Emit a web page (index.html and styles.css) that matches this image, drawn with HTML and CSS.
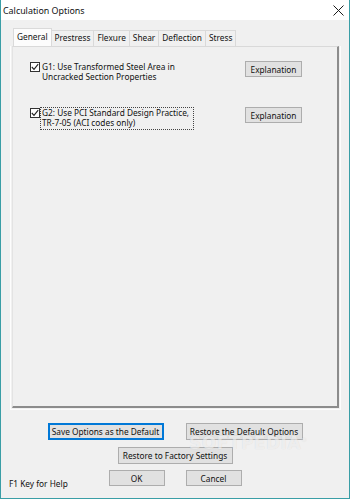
FILE: index.html
```html
<!DOCTYPE html>
<html lang="en">
<head>
    <meta charset="UTF-8">
    <meta name="viewport" content="width=device-width, initial-scale=1.0">
    <title>Calculation Options</title>
    <link rel="stylesheet" href="styles.css">
</head>
<body>
    <div class="window">
        <div class="titlebar">
            <span class="title">Calculation Options</span>
            <svg class="close" width="11" height="11" viewBox="0 0 11 11">
                <path d="M0.5 0.5 L10.5 10.5 M10.5 0.5 L0.5 10.5" stroke="#1a1a1a" stroke-width="1" fill="none"/>
            </svg>
        </div>

        <div class="content">
            <!-- Tab strip -->
            <div class="tabs">
                <div class="tab active">General</div>
                <div class="tab">Prestress</div>
                <div class="tab">Flexure</div>
                <div class="tab">Shear</div>
                <div class="tab">Deflection</div>
                <div class="tab">Stress</div>
            </div>

            <div class="tab-frame">
                <div class="panel">
                    <div class="option">
                        <label class="check">
                            <span class="box">
                                <svg width="8" height="8" viewBox="0 0 8 8"><path d="M0.8 4 L3 6.3 L7.2 1.2" stroke="#222" stroke-width="1.1" fill="none"/></svg>
                            </span>
                            <span class="text">G1: Use Transformed Steel Area in<br>Uncracked Section Properties</span>
                        </label>
                        <button class="btn">Explanation</button>
                    </div>
                    <div class="option">
                        <label class="check">
                            <span class="box">
                                <svg width="8" height="8" viewBox="0 0 8 8"><path d="M0.8 4 L3 6.3 L7.2 1.2" stroke="#222" stroke-width="1.1" fill="none"/></svg>
                            </span>
                            <span class="text focused">G2: Use PCI Standard Design Practice,<br>TR-7-05 (ACI codes only)</span>
                        </label>
                        <button class="btn">Explanation</button>
                    </div>
                </div>
            </div>

            <div class="actions">
                <button class="btn save default">Save Options as the Default</button>
                <button class="btn restore">Restore the Default Options</button>
            </div>
            <div class="actions second">
                <button class="btn factory">Restore to Factory Settings</button>
            </div>
            <div class="footer">
                <span class="help">F1 Key for Help</span>
                <div class="footer-buttons">
                    <button class="btn small">OK</button>
                    <button class="btn small">Cancel</button>
                </div>
                <span></span>
            </div>

            <div class="watermark">SOFTPEDIA<sup>®</sup></div>
        </div>
    </div>
</body>
</html>
```

FILE: styles.css
```css
* {
    box-sizing: border-box;
}

body {
    margin: 0;
    padding: 0;
    background: #f0f0f0;
    font-family: 'Noto Sans', 'Open Sans', sans-serif;
    font-size: 8.3px;
    color: #000;
}

.window {
    width: 350px;
    height: 499px;
    border: 1px solid #3a9ea6;
    border-top: none;
    background: #f0f0f0;
    position: relative;
    overflow: hidden;
}

.titlebar {
    height: 20px;
    background: #fff;
    display: flex;
    align-items: center;
    justify-content: space-between;
    padding: 0 5px 0 2px;
}

.title {
    font-size: 8.9px;
    color: #111;
}

.content {
    padding: 8px 8px 0 9px;
}

/* tabs */
.tabs {
    display: flex;
    align-items: flex-end;
    height: 18px;
    padding-left: 3px;
}

.tab {
    height: 16px;
    line-height: 14px;
    padding: 0 3px;
    border: 1px solid #d9d9d9;
    border-bottom: none;
    margin-left: -1px;
    background: #f0f0f0;
    color: #111;
    white-space: nowrap;
}

.tab.active {
    height: 18px;
    line-height: 15px;
    background: #fcfcfc;
    border-color: #dadada;
    margin-left: 0;
    padding: 0 3px;
    position: relative;
    z-index: 1;
}

.tab-frame {
    border: 1px solid #fdfdfd;
    border-top: none;
    padding: 0 1px 1px 1px;
}

.panel {
    height: 362px;
    border-top: 1px solid #d9d9d9;
    border-left: 1px solid #e3e3e3;
    border-right: 2px solid #8c8c8c;
    border-bottom: 2px solid #8c8c8c;
    padding: 14px 0 0 17px;
    display: flex;
    flex-direction: column;
    gap: 24px;
}

.option {
    display: grid;
    grid-template-columns: 215px 57px;
    align-items: start;
}

.check {
    display: flex;
    align-items: flex-start;
}

.box {
    width: 10px;
    height: 10px;
    border: 1px solid #333;
    background: #fff;
    margin-top: 1px;
    display: flex;
    align-items: center;
    justify-content: center;
}

.text {
    line-height: 10px;
    padding: 0 1px;
    border: 1px solid transparent;
    color: #111;
    white-space: nowrap;
}

.text.focused {
    border: 1px dotted #444;
    padding: 0 4px 1px 1px;
}

.btn {
    font-family: 'Noto Sans', 'Open Sans', sans-serif;
    font-size: 8.3px;
    color: #111;
    background: #e1e1e1;
    border: 1px solid #adadad;
    height: 16px;
    padding: 0;
    margin: 0;
    white-space: nowrap;
}

.actions {
    display: flex;
    justify-content: center;
    gap: 22px;
    margin-top: 13px;
    padding-right: 1px;
}

.actions.second {
    margin-top: 7px;
}

.btn.save {
    height: 17px;
    width: 116px;
}

.btn.restore {
    height: 17px;
    width: 117px;
}

.btn.factory {
    height: 17px;
    width: 115px;
}

.btn.default {
    border: 1px solid #0078d7;
    box-shadow: inset 0 0 0 1px #0078d7;
}

.footer {
    display: grid;
    grid-template-columns: 1fr auto 1fr;
    margin-top: 6px;
    margin-left: -9px;
    margin-right: -8px;
}

.footer-buttons {
    display: flex;
    gap: 21px;
}

.btn.small {
    width: 56px;
}

.help {
    align-self: end;
    padding-left: 8px;
    margin-bottom: -3px;
    color: #111;
    white-space: nowrap;
}

.watermark {
    position: absolute;
    left: 188px;
    top: 433px;
    font-family: 'DejaVu Sans', sans-serif;
    font-size: 17px;
    font-weight: bold;
    color: rgba(255, 255, 255, 0.6);
    text-shadow: 0 0 1px rgba(0, 0, 0, 0.12);
    letter-spacing: 0.5px;
    pointer-events: none;
}

.watermark sup {
    font-size: 6px;
}
```
